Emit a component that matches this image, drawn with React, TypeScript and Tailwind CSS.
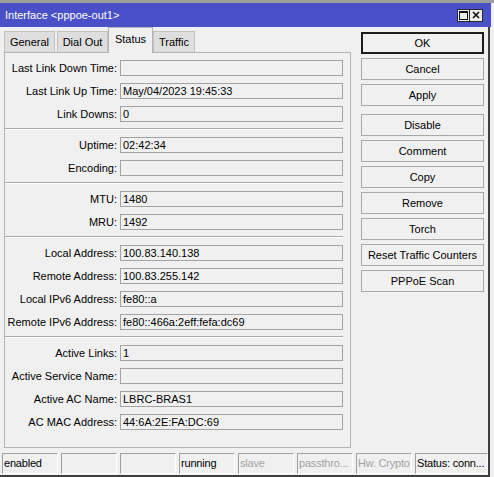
import React from "react";

// Winbox-style interface window, "Status" tab of a PPPoE client.

type Row = [string, string];

const sections: Row[][] = [
  [
    ["Last Link Down Time:", ""],
    ["Last Link Up Time:", "May/04/2023 19:45:33"],
    ["Link Downs:", "0"],
  ],
  [
    ["Uptime:", "02:42:34"],
    ["Encoding:", ""],
  ],
  [
    ["MTU:", "1480"],
    ["MRU:", "1492"],
  ],
  [
    ["Local Address:", "100.83.140.138"],
    ["Remote Address:", "100.83.255.142"],
    ["Local IPv6 Address:", "fe80::a"],
    ["Remote IPv6 Address:", "fe80::466a:2eff:fefa:dc69"],
  ],
  [
    ["Active Links:", "1"],
    ["Active Service Name:", ""],
    ["Active AC Name:", "LBRC-BRAS1"],
    ["AC MAC Address:", "44:6A:2E:FA:DC:69"],
  ],
];

const tabs = ["General", "Dial Out", "Status", "Traffic"];
const tabWidths: Record<string, string> = {
  General: "w-[51px]",
  "Dial Out": "w-[51px]",
  Status: "w-[45px]",
  Traffic: "w-[42px]",
};

const buttonsTop = ["Cancel", "Apply"];
const buttonsBottom = ["Disable", "Comment", "Copy", "Remove", "Torch", "Reset Traffic Counters", "PPPoE Scan"];

const statusCells: { text: string; dim?: boolean }[] = [
  { text: "enabled" },
  { text: "" },
  { text: "" },
  { text: "running" },
  { text: "slave", dim: true },
  { text: "passthro...", dim: true },
  { text: "Hw. Crypto", dim: true },
];

function Field({ label, value }: { label: string; value: string }) {
  return (
    <div className="flex items-center h-[16px]">
      <div className="w-[112px] text-right whitespace-nowrap leading-none">{label}</div>
      <div className="ml-[3px] w-[223px] h-[16px] border border-[#a3a3a3] bg-[#f0f0f0] pl-[2px] flex items-center leading-none whitespace-nowrap overflow-hidden">
        {value}
      </div>
    </div>
  );
}

function WinButton({ label, primary }: { label: string; primary?: boolean }) {
  return (
    <button
      type="button"
      className={
        primary
          ? "h-[22px] w-[123px] border-2 border-[#1c1c1c] bg-[#f0f0f0] leading-none"
          : "h-[22px] w-[123px] border border-[#a8a8a8] bg-[#f0f0f0] leading-none"
      }
    >
      {label}
    </button>
  );
}

export default function App() {
  return (
    <div className="w-[494px] h-[477px] bg-[#f0f0f0] text-black text-[11px] font-['Liberation_Sans',Arial,sans-serif] flex flex-col overflow-hidden">
      <div className="h-[3px] bg-[#9e9e9e]" />

      {/* title bar */}
      <div className="h-[24px] w-[491px] bg-[#4a50c8] flex items-center pl-[5px] text-white text-[11px]">
        <span className="leading-none">Interface &lt;pppoe-out1&gt;</span>
        <div className="ml-auto mr-[8px] flex">
          <div className="w-[13px] h-[13px] border border-[#2a2a2a] bg-[#ececec] flex items-center justify-center">
            <svg width="9" height="9" viewBox="0 0 9 9">
              <rect x="0.5" y="0.5" width="8" height="8" fill="none" stroke="#111" strokeWidth="1" />
              <line x1="0" y1="1.5" x2="9" y2="1.5" stroke="#111" strokeWidth="1" />
            </svg>
          </div>
          <div className="w-[13px] h-[13px] border border-l-0 border-[#2a2a2a] bg-[#ececec] flex items-center justify-center">
            <svg width="8" height="8" viewBox="0 0 8 8">
              <path d="M1 1 L7 7 M7 1 L1 7" stroke="#111" strokeWidth="1.6" />
            </svg>
          </div>
        </div>
      </div>

      <div className="w-[490px] flex-1 flex flex-col border-r-2 border-[#3e3e3e]">
        <div className="flex h-[426px]">
          {/* left: tabs + panel */}
          <div className="ml-[4px] w-[347px] flex flex-col">
            <div className="h-[25px] flex items-end">
              {tabs.map((t) =>
                t === "Status" ? (
                  <div
                    key={t}
                    className={`${tabWidths[t]} h-[26px] -mb-px relative z-10 bg-[#f0f0f0] border border-b-0 border-[#b4b4b4] flex items-center justify-center pb-[3px]`}
                  >
                    {t}
                  </div>
                ) : (
                  <div
                    key={t}
                    className={`${tabWidths[t]} h-[21px] bg-[#dedede] border border-b-0 border-[#c2c2c2] flex items-center justify-center ${t === "Dial Out" ? "ml-[2px]" : ""}`}
                  >
                    {t}
                  </div>
                )
              )}
            </div>
            <div className="h-[396px] border border-[#b4b4b4] bg-[#f0f0f0] pt-[7px]">
              {sections.map((rows, i) => (
                <div key={i}>
                  {i > 0 && <div className="mt-[6px] mb-[7px] mr-[7px] border-t border-[#a9a9a9] border-b border-b-white" />}
                  <div className="flex flex-col gap-[7px]">
                    {rows.map(([l, v]) => (
                      <Field key={l} label={l} value={v} />
                    ))}
                  </div>
                </div>
              ))}
            </div>
          </div>

          {/* right: buttons */}
          <div className="ml-[10px] pt-[5px] flex flex-col">
            <WinButton label="OK" primary />
            <div className="mt-[4px] flex flex-col gap-[4px]">
              {buttonsTop.map((b) => (
                <WinButton key={b} label={b} />
              ))}
            </div>
            <div className="mt-[8px] flex flex-col gap-[4px]">
              {buttonsBottom.map((b) => (
                <WinButton key={b} label={b} />
              ))}
            </div>
          </div>
        </div>

        {/* status bar */}
        <div className="h-[21px] flex gap-[3px] pl-[2px] tracking-[-0.2px]">
          {statusCells.map((c, i) => (
            <div
              key={i}
              className={`w-[56px] h-[21px] border border-[#a0a0a0] border-r-white border-b-white flex items-center pl-[1px] whitespace-nowrap overflow-hidden leading-none ${c.dim ? "text-[#a3a3a3]" : ""}`}
            >
              {c.text}
            </div>
          ))}
          <div className="w-[73px] h-[21px] border border-[#a0a0a0] border-r-white border-b-white flex items-center pl-[1px] whitespace-nowrap overflow-hidden leading-none">
            Status: conn...
          </div>
        </div>
        <div className="flex-1" />
      </div>
      <div className="h-[2px] w-[490px] bg-[#3e3e3e]" />
    </div>
  );
}
